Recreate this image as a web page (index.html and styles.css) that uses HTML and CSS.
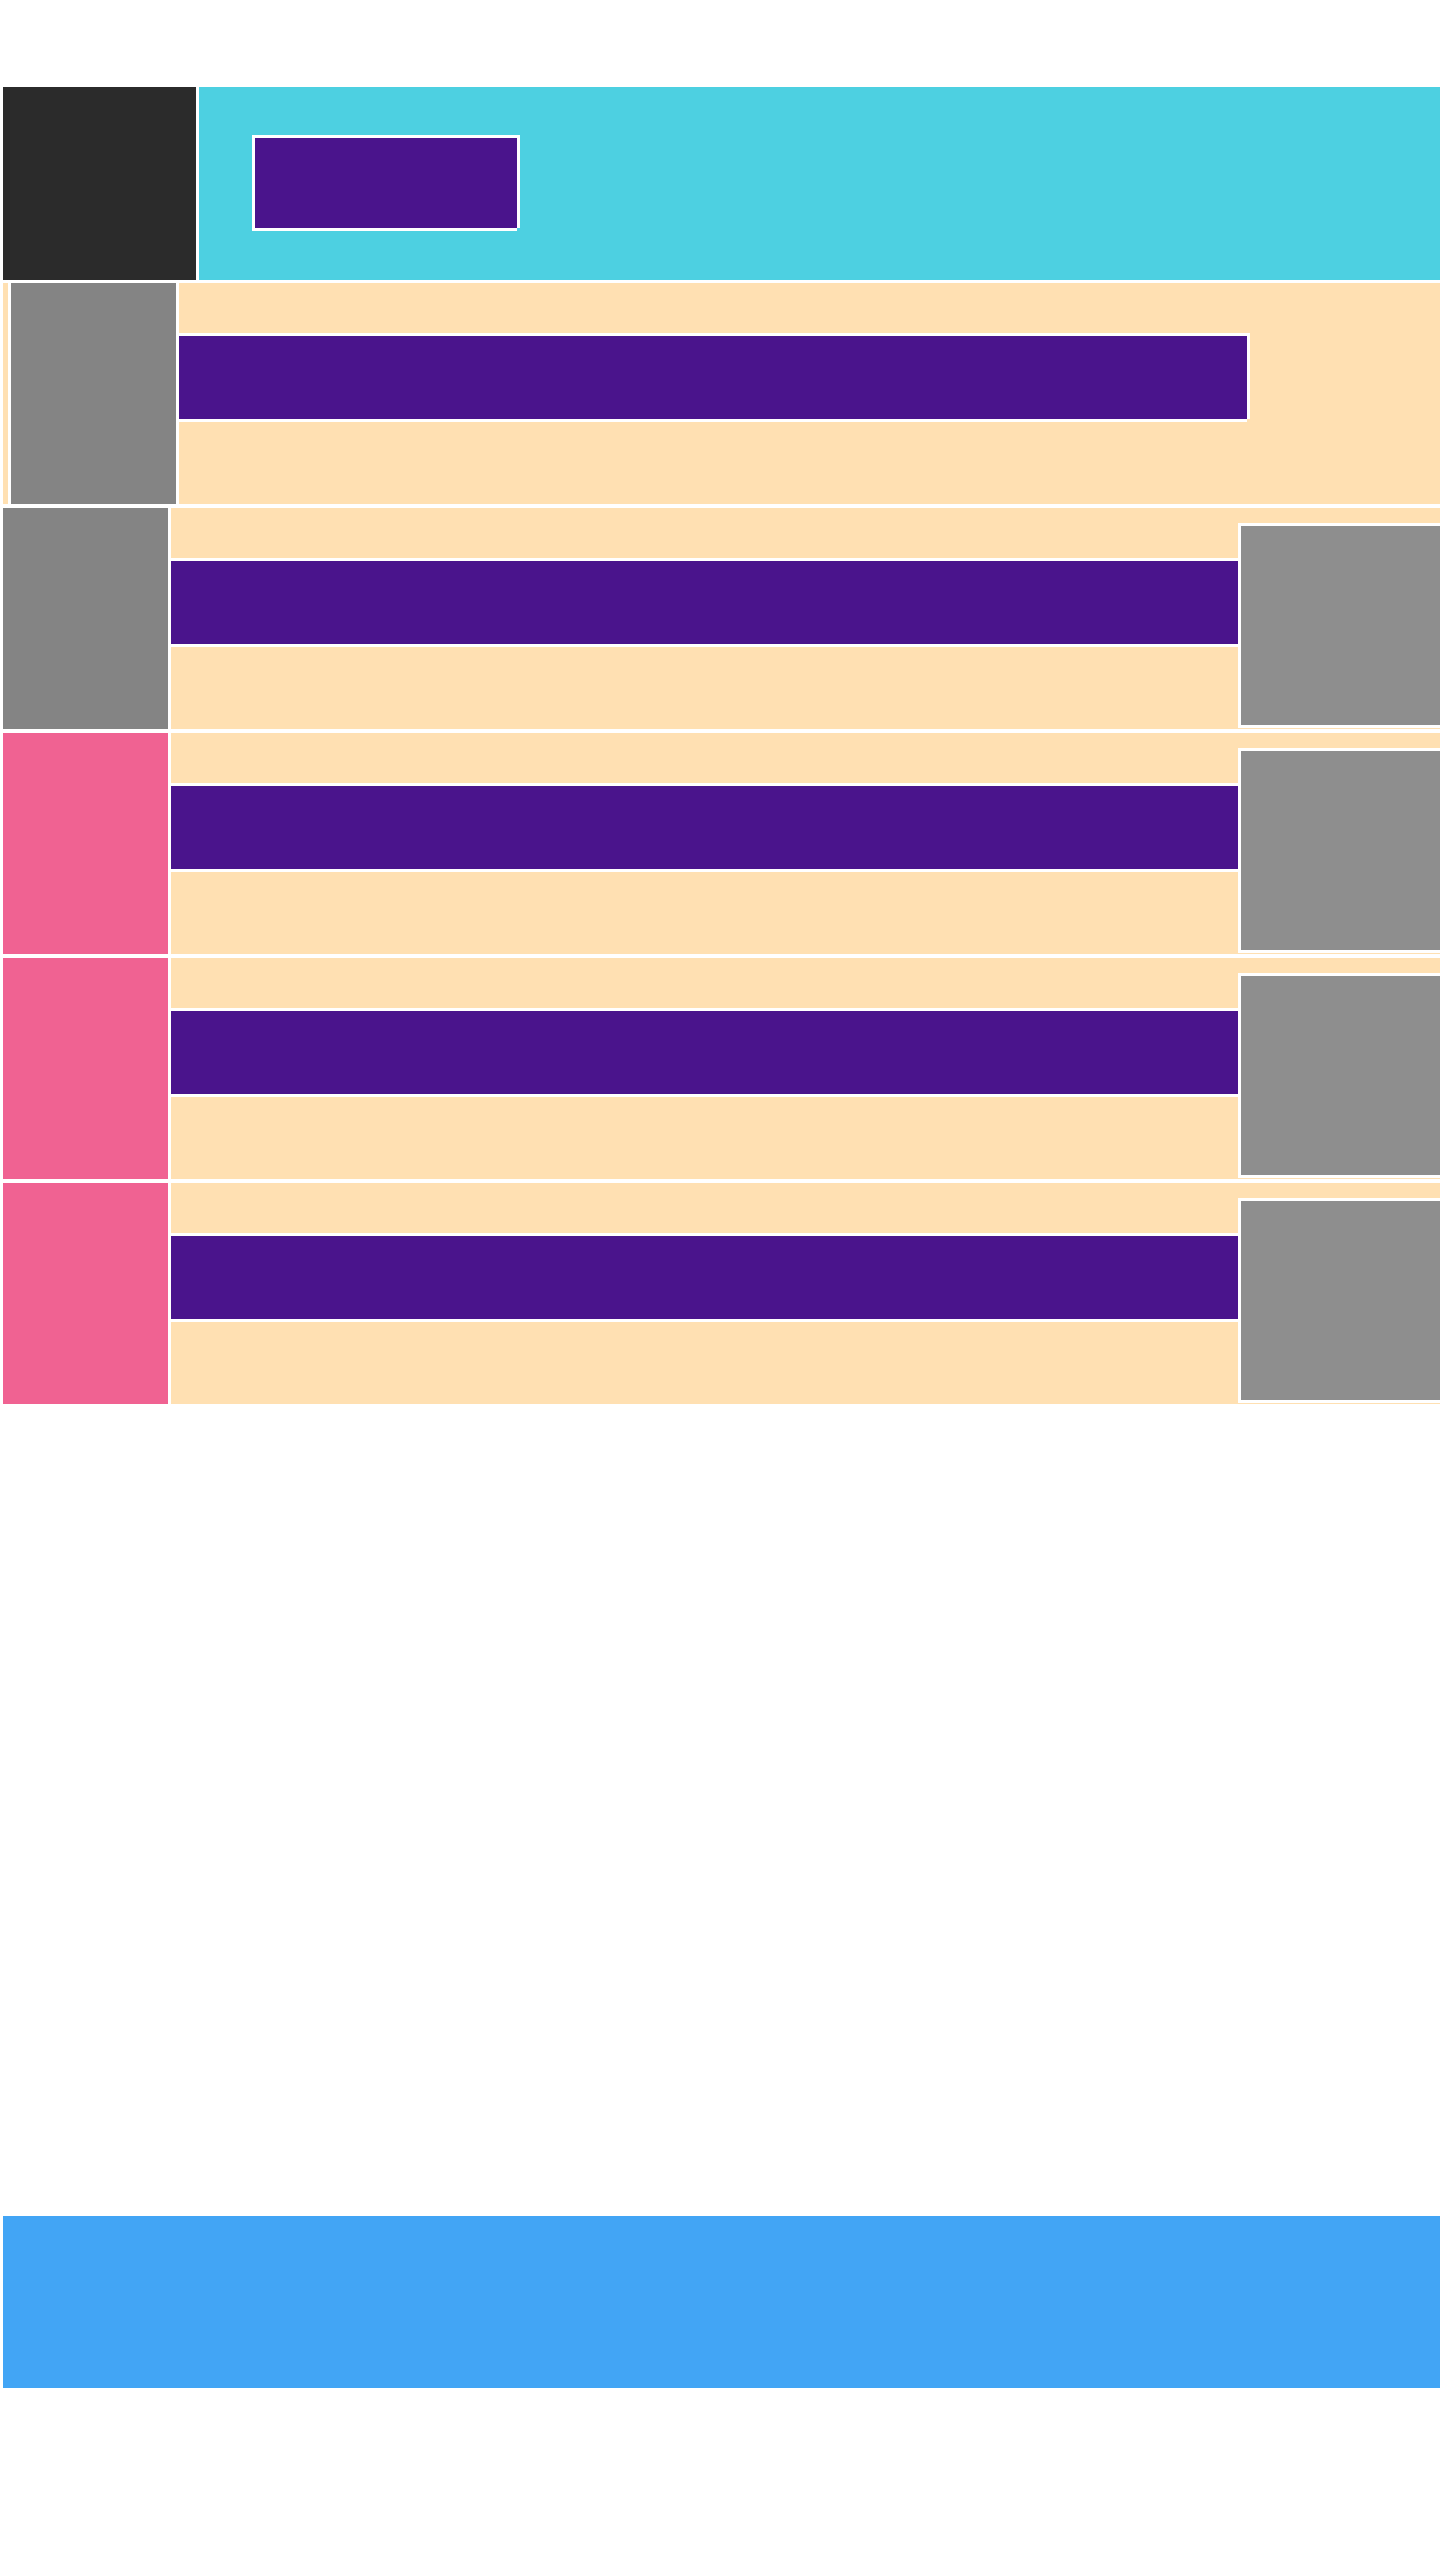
FILE: index.html
```html
<!DOCTYPE html>
<html lang="en">
<head>
<meta charset="utf-8">
<meta name="viewport" content="width=device-width, initial-scale=1">
<title>Layout blocks</title>
<link rel="stylesheet" href="styles.css">
</head>
<body>
<header class="bar">
  <div class="bar-icon"></div>
  <div class="bar-body"><div class="label bar-title"></div></div>
</header>
<main>
  <ul class="list">
    <li class="row row-inset"><div class="lead"></div><div class="label row-label"></div></li>
    <li class="row"><div class="lead"></div><div class="label row-label"></div><div class="action"></div></li>
    <li class="row"><div class="lead lead-pink"></div><div class="label row-label"></div><div class="action"></div></li>
    <li class="row"><div class="lead lead-pink"></div><div class="label row-label"></div><div class="action"></div></li>
    <li class="row"><div class="lead lead-pink"></div><div class="label row-label"></div><div class="action"></div></li>
  </ul>
</main>
<footer class="footer"></footer>
</body>
</html>
```

FILE: styles.css
```css
* {
  box-sizing: border-box;
}

body {
  display: flex;
  flex-direction: column;
  min-height: 100vh;
  margin: 0;
  padding: 87px 0 172px 3px;
  background: #fff;
  font-family: Roboto, sans-serif;
}

.bar {
  display: flex;
  gap: 3px;
  height: 193px;
  margin-bottom: 3px;
}

.bar-icon {
  flex: none;
  width: 193px;
  background: #2b2b2b;
}

.bar-body {
  flex: 1;
  padding: 48px 53px;
  background: #4dd0e1;
}

/* Outline on all sides, open at the lower right corner */
.label {
  border-top: 3px solid #fff;
  background: #4a148c;
  box-shadow: 3px 0 #fff, 0 3px #fff;
}

.bar-title {
  width: 265px;
  height: 93px;
  border-left: 3px solid #fff;
}

.list {
  display: flex;
  flex-direction: column;
  gap: 4px;
  margin: 0;
  padding: 0;
  list-style: none;
}

.row {
  display: flex;
  height: 221px;
  background: #ffe0b2;
}

.row-inset {
  padding-left: 5px;
  padding-right: 193px;
}

.lead {
  flex: none;
  width: 168px;
  border-right: 3px solid #fff;
  background: #848484;
}

.row-inset .lead {
  width: 171px;
  border-left: 3px solid #fff;
}

.lead-pink {
  background: #f06292;
}

.row-label {
  flex: 1;
  height: 86px;
  margin-top: 50px;
}

.action {
  flex: none;
  width: 202px;
  height: 205px;
  margin-top: 15px;
  border: 3px solid #fff;
  border-right: 0;
  background: #8e8e8e;
}

.footer {
  height: 172px;
  margin-top: auto;
  background: #42a5f5;
}
```
